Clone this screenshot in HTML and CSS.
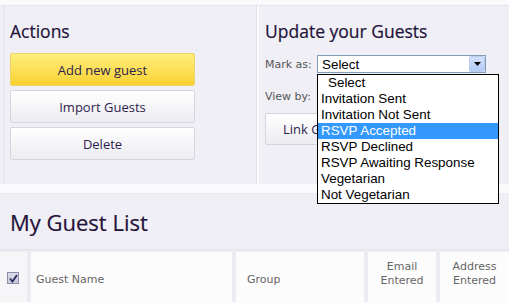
FILE: index.html
```html
<!DOCTYPE html>
<html>
<head>
<meta charset="utf-8">
<link rel="stylesheet" href="styles.css">
</head>
<body>
<div class="top">
  <section class="actions">
    <h2 class="title">Actions</h2>
    <button class="btn btn-yellow">Add new guest</button>
    <button class="btn">Import Guests</button>
    <button class="btn">Delete</button>
  </section>
  <section class="update">
    <h2 class="title">Update your Guests</h2>
    <div class="field">
      <span class="label">Mark as:</span>
      <div class="select">
        <span class="select-text">Select</span>
        <span class="select-arrow"><svg width="7" height="4" viewBox="0 0 7 4"><path d="M0 0H7L3.5 4Z" fill="#000"/></svg></span>
      </div>
    </div>
    <div class="field field-last">
      <span class="label">View by:</span>
    </div>
    <button class="btn btn-link"><span class="link-text">Link G</span></button>
    <ul class="dropdown">
      <li class="opt opt-first">Select</li>
      <li class="opt">Invitation Sent</li>
      <li class="opt">Invitation Not Sent</li>
      <li class="opt opt-active">RSVP Accepted</li>
      <li class="opt">RSVP Declined</li>
      <li class="opt">RSVP Awaiting Response</li>
      <li class="opt">Vegetarian</li>
      <li class="opt">Not Vegetarian</li>
    </ul>
  </section>
</div>
<div class="gap"></div>
<section class="guests">
  <h2 class="big-title">My Guest List</h2>
  <div class="thead">
    <div class="th th-check"><span class="checkbox"><svg width="9" height="9" viewBox="0 0 9 9"><path d="M1 4.5L3.5 7.5L8 1" fill="none" stroke="#2a2a5a" stroke-width="1.8"/></svg></span></div>
    <div class="th th-name">Guest Name</div>
    <div class="th th-group">Group</div>
    <div class="th th-email">Email<br>Entered</div>
    <div class="th th-addr">Address<br>Entered</div>
  </div>
</section>
</body>
</html>
```

FILE: styles.css
```css
* { box-sizing: border-box; }
html, body { margin: 0; padding: 0; }
body {
  width: 509px;
  height: 303px;
  overflow: hidden;
  background: #fafafc;
  font-family: "Open Sans", sans-serif;
}
.top {
  margin-top: 5px;
  display: flex;
  height: 179px;
  background: #f0eff5;
  border-top: 1px solid #e6e5ed;
}
.actions {
  width: 254px;
  padding: 14px 0 0 5px;
  margin-left: 3px;
  border-left: 2px solid #e8e7ef;
  border-right: 1px solid #e2e1ea;
}
.update {
  position: relative;
  flex: 1;
  border-left: 2px solid #fbfbfd;
  padding: 14px 0 0 6px;
}
.title {
  margin: 0;
  font-size: 17.5px;
  line-height: 22px;
  font-weight: 400;
  color: #23123a;
  -webkit-text-stroke: 0.2px #23123a;
}
.actions .title { margin-bottom: 11px; }
.update .title { margin-bottom: 13px; }
.btn {
  display: block;
  width: 185px;
  height: 33px;
  margin: 0 0 4px 0;
  padding: 0;
  font-family: "Open Sans", sans-serif;
  font-size: 13px;
  color: #2d1d4d;
  background: linear-gradient(#ffffff, #ececf1);
  border: 1px solid #d6d4de;
  border-radius: 2px;
}
.btn-yellow {
  background: linear-gradient(#ffee7c, #f9d232);
  border-color: #eed36a;
}
.btn-link {
  width: 110px;
  height: 32px;
  margin-top: 8px;
  text-align: left;
  padding-left: 17px;
}
.field {
  display: flex;
  align-items: center;
  height: 18px;
  margin-bottom: 14px;
}
.field-last { margin-bottom: 0; }
.label {
  width: 52px;
  font-family: "DejaVu Sans", sans-serif;
  font-size: 11px;
  color: #555;
}
.select {
  width: 169px;
  height: 18px;
  background: #fff;
  border: 1px solid #7f9db9;
  display: flex;
  align-items: center;
}
.select-text {
  flex: 1;
  padding-left: 4px;
  font-family: "Liberation Sans", Arial, sans-serif;
  font-size: 13.4px;
  color: #000;
}
.select-arrow {
  width: 16px;
  height: 16px;
  display: flex;
  align-items: center;
  justify-content: center;
  background: linear-gradient(#d3e1fb, #b3cbf5);
  border: 1px solid #b9cbef;
  border-radius: 2px;
}
.dropdown {
  position: absolute;
  left: 58px;
  top: 68px;
  width: 182px;
  margin: 0;
  padding: 0;
  list-style: none;
  background: #fff;
  border: 1px solid #000;
  font-family: "Liberation Sans", Arial, sans-serif;
  font-size: 13.4px;
  color: #000;
}
.opt {
  height: 16px;
  line-height: 16px;
  padding-left: 3px;
  white-space: nowrap;
}
.opt-first { padding-left: 10px; }
.opt-active { background: #3399ff; color: #fff; }
.gap {
  height: 10px;
  border-bottom: 1px solid #ebeaf1;
}
.guests {
  background: #f0eff5;
  height: 108px;
  padding-top: 14px;
}
.big-title {
  margin: 0 0 13px 10px;
  font-size: 22px;
  line-height: 28px;
  font-weight: 400;
  color: #23123a;
  -webkit-text-stroke: 0.2px #23123a;
}
.thead {
  display: flex;
  gap: 4px;
  border-top: 1px solid #e3e2ea;
  padding-top: 2px;
  background: #ecebf2;
  height: 53px;
}
.th {
  background: #fcfcfd;
  font-family: "DejaVu Sans", sans-serif;
  font-size: 11px;
  line-height: 14px;
  color: #666;
}
.th-check { width: 27px; background: #f6f6f9; padding: 20px 0 0 7px; }
.th-name { width: 201px; padding: 21px 0 0 5px; }
.th-group { width: 128px; padding: 21px 0 0 11px; }
.th-email { width: 68px; padding: 8px 0 0 0; text-align: center; }
.th-addr { flex: 1; padding: 8px 0 0 0; text-align: center; }
.checkbox {
  display: flex;
  align-items: center;
  justify-content: center;
  width: 12px;
  height: 12px;
  border: 1px solid #8d8da5;
  background: linear-gradient(#dcdcec, #c8c8de);
}
```
